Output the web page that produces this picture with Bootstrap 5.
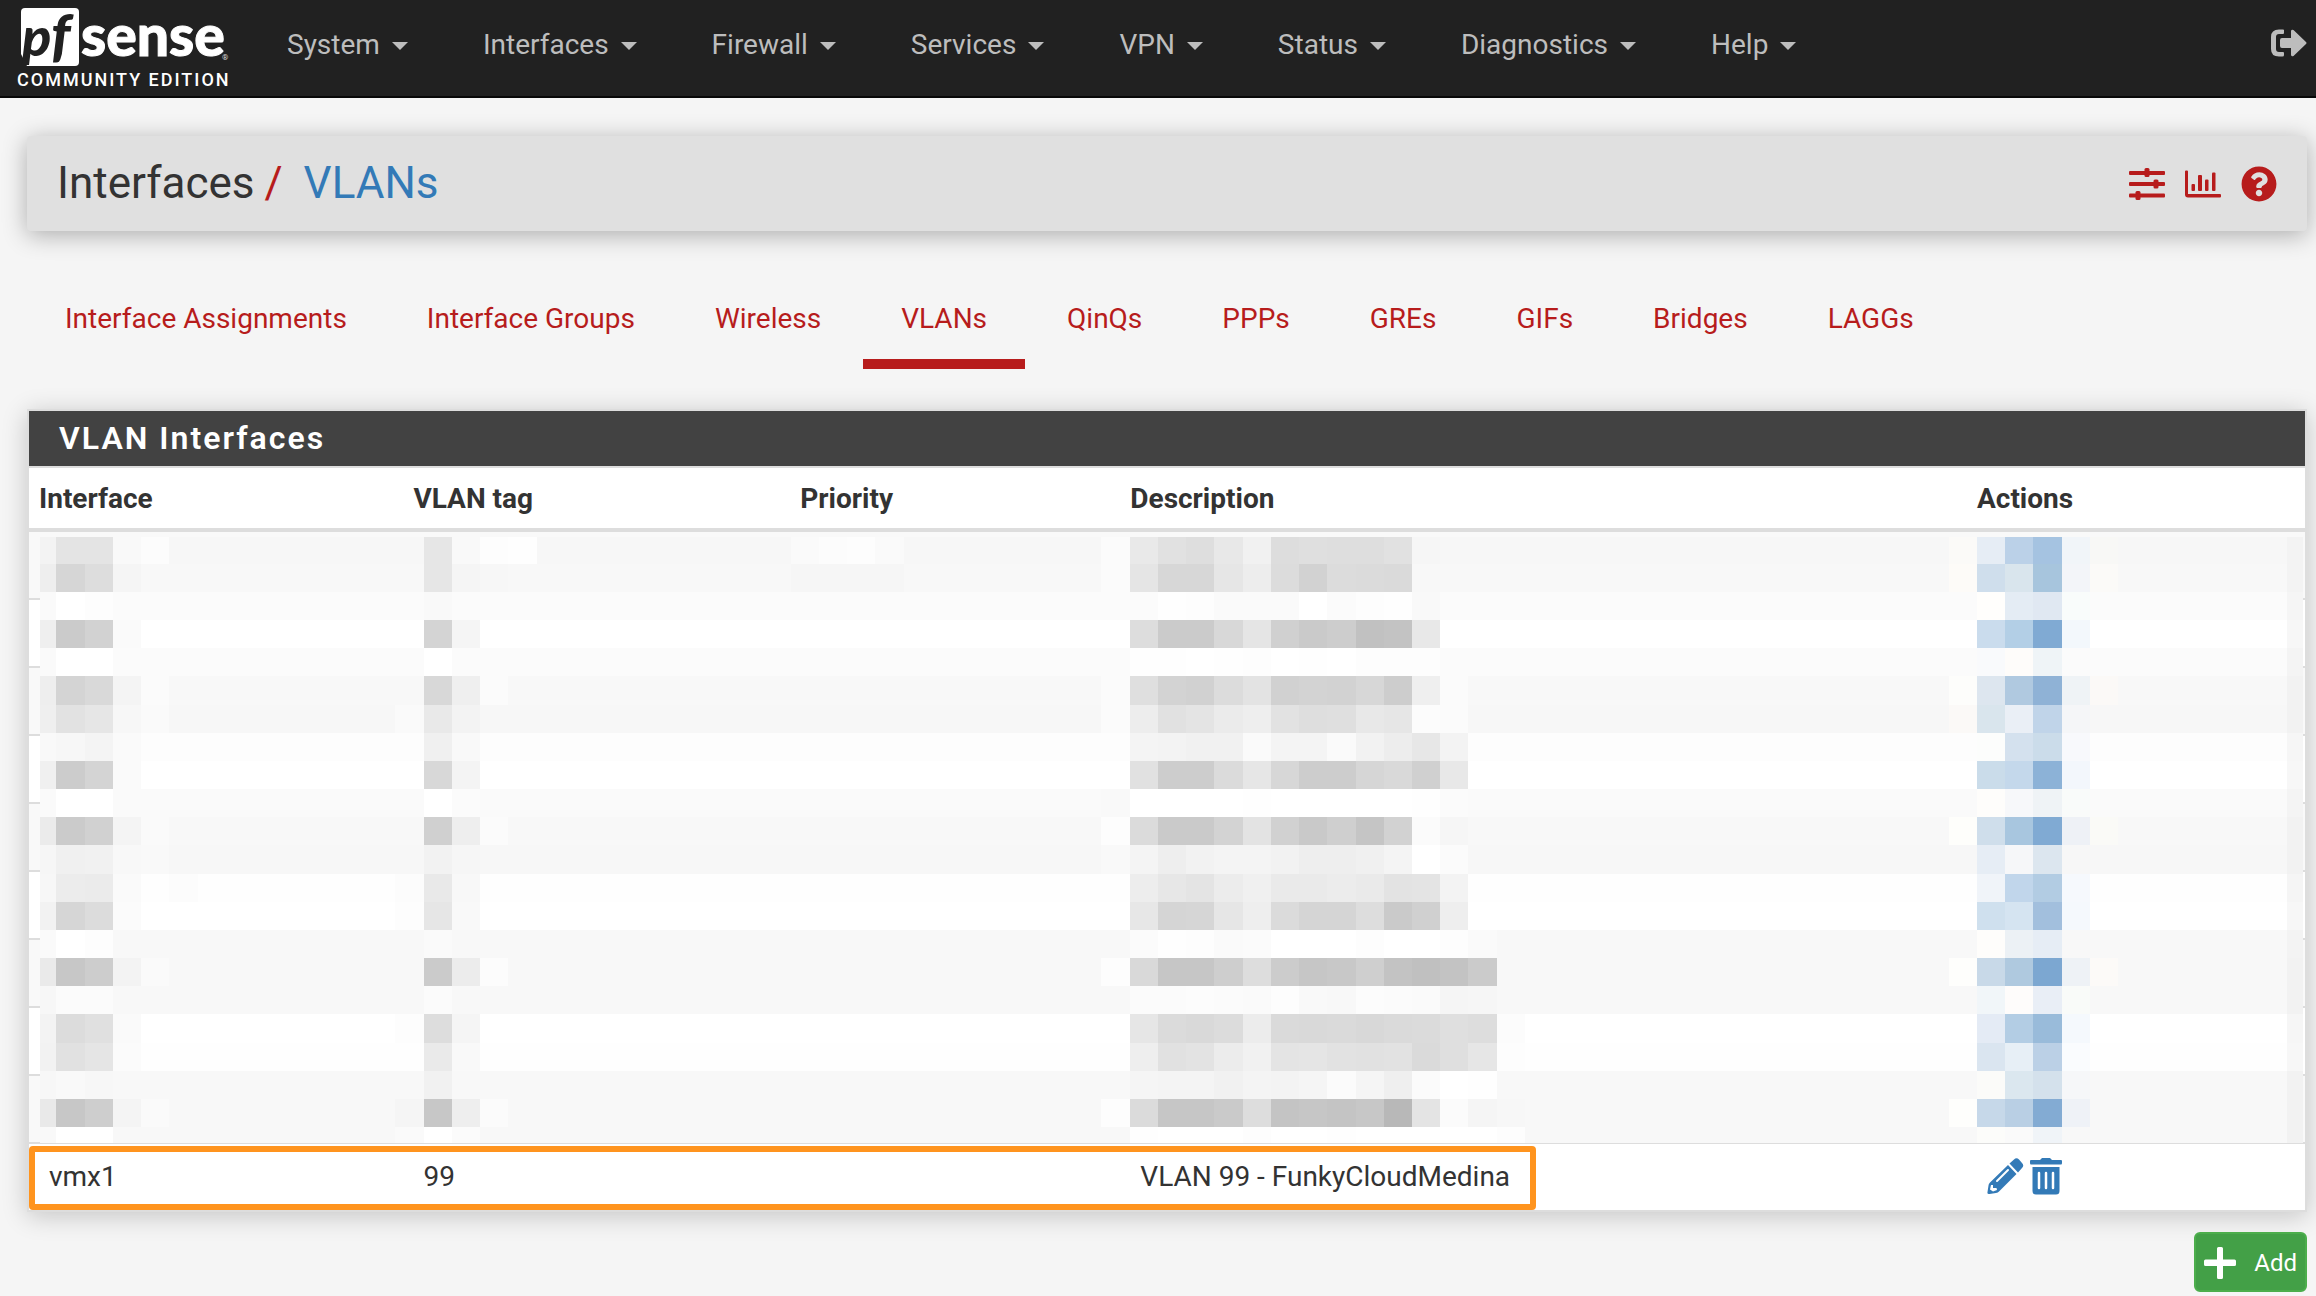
<!DOCTYPE html>
<html lang="en">
<head>
<meta charset="utf-8">
<meta name="viewport" content="width=device-width, initial-scale=1">
<title>Interfaces: VLANs</title>
<link href="https://cdn.jsdelivr.net/npm/bootstrap@5.3.0/dist/css/bootstrap.min.css" rel="stylesheet">
<style>
  body { background: #f5f5f5; color: #333; font-family: Roboto, "Liberation Sans", sans-serif; font-size: 28px; line-height: 40px; }
  a { text-decoration: none; }
  .topbar { --bs-navbar-padding-y: 0; height: 98px; background: #212121; border-bottom: 2px solid #080808; }
  .brand-logo { width: 230px; height: 96px; margin-left: 10px; margin-right: 9px; }
  .topbar .navbar-nav .nav-link { color: #bdbdbd; padding: 25px 37px 31px 38px; }
  .topbar .navbar-nav .dropdown-toggle::after { margin-left: 12px; vertical-align: 4px; border-top: 8px solid; border-right: 8px solid transparent; border-left: 8px solid transparent; }
  .signout { color: #bdbdbd; line-height: 0; margin-right: 9px; padding-bottom: 10px; }
  .page-head { background: #e0e0e0; height: 95px; margin: 38px 9px 0 27px; padding: 0 30px 0 30px; border-radius: 4px; box-shadow: 0 4px 24px rgba(0,0,0,.3); }
  .page-head h1 { font-size: 44px; line-height: 56px; font-weight: 400; padding-bottom: 2px; }
  .page-head .sep { color: #b71c1c; padding: 0 10px; }
  .page-head h1 a, .act { color: #337ab7; }
  .tools { gap: 20px; }
  .tools a { color: #b71c1c; line-height: 0; }
  .sub-tabs { margin: 45px 9px 40px 27px; gap: 4px; }
  .sub-tabs .nav-link { color: #b71c1c; padding: 23px 38px 20px; border-bottom: 10px solid transparent; }
  .sub-tabs .nav-link.active { border-bottom-color: #b71c1c; }
  .vlan-panel { margin: 0 9px 0 27px; border: 2px solid #ddd; background: #fff; box-shadow: 0 4px 24px rgba(0,0,0,.2); }
  .vlan-panel h2 { background: #424242; color: #fff; font-size: 32px; line-height: 55px; font-weight: 600; letter-spacing: 2px; padding-left: 30px; border-bottom: 2px solid #ddd; }
  .vlan-table { --bs-table-striped-bg: #f9f9f9; --bs-table-color: #333; --bs-table-striped-color: #333; table-layout: fixed; border-collapse: separate; border-spacing: 0; }
  .vlan-table > thead > tr > th { padding: 13px 10px 11px; line-height: 36px; border-bottom: 4px solid #ddd; font-weight: 700; }
  .vlan-table > tbody > tr > td { padding: 13px 20px; border-top: 2px solid #ddd; border-bottom: 0; }
  .vlan-table > tbody > tr:first-child > td { border-top: 0; }
  .row-tools { gap: 6px; padding-bottom: 2px; }
  .act { display: inline-block; line-height: 0; }
  .redaction { left: 11px; top: 69px; width: calc(100% - 13px); height: 606px; }
  .callout-box { left: 0; bottom: 0; width: 66.2%; height: 64px; border: 6px solid #ff941e; border-radius: 4px; pointer-events: none; }
  .add-btn { --bs-btn-bg: #43a047; --bs-btn-border-color: #4cae4c; --bs-btn-color: #fff; --bs-btn-hover-bg: #388e3c; --bs-btn-hover-color: #fff; --bs-btn-border-width: 2px; height: 60px; padding: 2px 8px 0; font-size: 24px; gap: 18px; border-radius: 6px; margin: 20px 9px 4px 0; }
</style>
<script src="https://cdn.jsdelivr.net/npm/bootstrap@5.3.0/dist/js/bootstrap.bundle.min.js"></script>
</head>
<body>
<nav class="navbar navbar-expand topbar" aria-label="Main">
  <a class="p-0" href="#">
    <svg class="brand-logo d-block" viewBox="0 0 230 96" role="img" aria-label="pfSense Community Edition">
      <path fill="#fff" d="M15 8H65Q69 8 69 12V62Q69 66 65 66H11V12Q11 8 15 8Z"/>
      <path fill="#212121" d="M11 54L17 66H11Z"/>
      <g font-family="Lato, sans-serif" font-weight="900">
        <text x="12" y="56" font-size="54" font-style="italic" fill="#212121">p</text>
        <text x="41" y="56" font-size="58" font-style="italic" fill="#212121">f</text>
        <text x="71" y="56" font-size="57" fill="#fff" stroke="#fff">sense<tspan dx="-3" dy="4" font-family="Roboto, sans-serif" font-weight="400" font-size="8" fill="#ddd" stroke="none">®</tspan></text>
      </g>
      <text x="7" y="86" font-family="Roboto, sans-serif" font-size="18" font-weight="500" letter-spacing="2" fill="#fff">COMMUNITY EDITION</text>
    </svg>
  </a>
  <ul class="navbar-nav me-auto">
    <li class="nav-item"><a class="nav-link dropdown-toggle" href="#">System</a></li>
    <li class="nav-item"><a class="nav-link dropdown-toggle" href="#">Interfaces</a></li>
    <li class="nav-item"><a class="nav-link dropdown-toggle" href="#">Firewall</a></li>
    <li class="nav-item"><a class="nav-link dropdown-toggle" href="#">Services</a></li>
    <li class="nav-item"><a class="nav-link dropdown-toggle" href="#">VPN</a></li>
    <li class="nav-item"><a class="nav-link dropdown-toggle" href="#">Status</a></li>
    <li class="nav-item"><a class="nav-link dropdown-toggle" href="#">Diagnostics</a></li>
    <li class="nav-item"><a class="nav-link dropdown-toggle" href="#">Help</a></li>
  </ul>
  <a class="signout" href="#" aria-label="Log out">
    <svg width="36" height="28" viewBox="0 0 36 28" fill="currentColor"><path d="M13 1V4Q13 5 12 5H8Q5 5 5 8V20Q5 23 8 23H12Q13 23 13 24V26Q13 27.500 11.500 27.500H8Q0 27.500 0 20V8Q0 .5 8 .5H12Q13 .5 13 1ZM20 2V9H11Q9 9 9 11V17Q9 19 11 19H20V26Q20.500 28 22.500 27L35 15Q36 14 35 13L22.500 1Q20.500 0 20 2Z"/></svg>
  </a>
</nav>

<header class="page-head d-flex align-items-center justify-content-between">
  <h1 class="mb-0">Interfaces<span class="sep">/</span> <a href="#">VLANs</a></h1>
  <div class="tools d-flex align-items-center">
    <a href="#" aria-label="Settings"><svg width="36" height="32" viewBox="0 0 36 32" fill="currentColor"><rect y="3" width="36" height="4" rx="1"/><rect y="14" width="36" height="4" rx="1"/><rect y="25.500" width="36" height="4" rx="1"/><rect x="15.500" y="0" width="5" height="9" rx="1.500"/><rect x="24.500" y="11.500" width="5" height="9" rx="1.500"/><rect x="6.500" y="23" width="5" height="9" rx="1.500"/></svg></a>
    <a href="#" aria-label="Status graph"><svg width="36" height="28" viewBox="0 0 36 28" fill="currentColor"><path d="M1 .5H2Q3 .5 3 1.500V24H35Q36 24 36 25V26.500Q36 27.500 35 27.500H3Q0 27.500 0 24.500V1.500Q0 .5 1 .5Z"/><rect x="6.500" y="14" width="3.500" height="7" rx="1"/><rect x="13" y="5" width="4" height="16" rx="1"/><rect x="20" y="9.500" width="3.500" height="11.500" rx="1"/><rect x="27" y="2.500" width="3.500" height="18.500" rx="1"/></svg></a>
    <a href="#" aria-label="Help"><svg width="36" height="36" viewBox="0 0 512 512" fill="currentColor"><path d="M504 256c0 136.997-111.043 248-248 248S8 392.997 8 256C8 119.083 119.043 8 256 8s248 111.083 248 248zM262.655 90c-54.497 0-89.255 22.957-116.549 63.758-3.536 5.286-2.353 12.415 2.715 16.258l34.699 26.310c5.205 3.947 12.621 3.008 16.665-2.122 17.864-22.658 30.113-35.797 57.303-35.797 20.429 0 45.698 13.148 45.698 32.958 0 14.976-12.363 22.667-32.534 33.976C247.128 238.528 216 254.941 216 296v4c0 6.627 5.373 12 12 12h56c6.627 0 12-5.373 12-12v-1.333c0-28.462 83.186-29.647 83.186-106.667 0-58.002-60.165-102-116.531-102zM256 338c-25.365 0-46 20.635-46 46 0 25.364 20.635 46 46 46s46-20.636 46-46c0-25.365-20.635-46-46-46z"/></svg></a>
  </div>
</header>

<ul class="nav sub-tabs">
  <li class="nav-item"><a class="nav-link" href="#">Interface Assignments</a></li>
  <li class="nav-item"><a class="nav-link" href="#">Interface Groups</a></li>
  <li class="nav-item"><a class="nav-link" href="#">Wireless</a></li>
  <li class="nav-item"><a class="nav-link active" aria-current="page" href="#">VLANs</a></li>
  <li class="nav-item"><a class="nav-link" href="#">QinQs</a></li>
  <li class="nav-item"><a class="nav-link" href="#">PPPs</a></li>
  <li class="nav-item"><a class="nav-link" href="#">GREs</a></li>
  <li class="nav-item"><a class="nav-link" href="#">GIFs</a></li>
  <li class="nav-item"><a class="nav-link" href="#">Bridges</a></li>
  <li class="nav-item"><a class="nav-link" href="#">LAGGs</a></li>
</ul>

<section class="vlan-panel">
  <h2 class="mb-0">VLAN Interfaces</h2>
  <div class="position-relative">
    <table class="table table-striped vlan-table mb-0">
      <colgroup><col style="width:16.45%"><col style="width:17%"><col style="width:14.5%"><col style="width:37.2%"><col style="width:14.85%"></colgroup>
      <thead><tr><th scope="col">Interface</th><th scope="col">VLAN tag</th><th scope="col">Priority</th><th scope="col">Description</th><th scope="col">Actions</th></tr></thead>
      <tbody>
        <tr><td>&nbsp;</td><td></td><td></td><td></td><td></td></tr>
        <tr><td>&nbsp;</td><td></td><td></td><td></td><td></td></tr>
        <tr><td>&nbsp;</td><td></td><td></td><td></td><td></td></tr>
        <tr><td>&nbsp;</td><td></td><td></td><td></td><td></td></tr>
        <tr><td>&nbsp;</td><td></td><td></td><td></td><td></td></tr>
        <tr><td>&nbsp;</td><td></td><td></td><td></td><td></td></tr>
        <tr><td>&nbsp;</td><td></td><td></td><td></td><td></td></tr>
        <tr><td>&nbsp;</td><td></td><td></td><td></td><td></td></tr>
        <tr><td>&nbsp;</td><td></td><td></td><td></td><td></td></tr>
        <tr class="align-middle"><td>vmx1</td><td>99</td><td></td><td>VLAN 99 - FunkyCloudMedina</td>
          <td class="text-nowrap"><div class="row-tools d-flex"><a class="act" href="#" aria-label="Edit VLAN"><svg width="37" height="38" viewBox="0 0 37 38" fill="currentColor"><path d="M27 2.500Q29.500 0 32 2.500L35 6Q37.500 8.500 35 11L31 15.500L22.500 6.500ZM21 8L29.500 17L12 34.500Q11 35.500 9 36L2.500 37Q0 37.500 .5 35L1.500 28.500Q1.500 27 3 25.500Z"/><path d="M10 24L21 13" stroke="#fff" stroke-width="2" stroke-linecap="round"/><path d="M4 28L6 28V31H9.500L10 33L6 34.500L3 32.500Z" fill="#fff"/></svg></a><a class="act" href="#" aria-label="Delete VLAN"><svg width="32" height="38" viewBox="0 0 32 38" fill="currentColor"><path d="M1 3H10L12 1H20L22 3H31Q32 3 32 4V6Q32 7.500 31 7.500H1Q0 7.500 0 6V4Q0 3 1 3ZM2.500 10H29.500V34Q29.500 37.500 26 37.500H6Q2.500 37.500 2.500 34Z"/><path d="M9 16V31M16 16V31M23 16V31" stroke="#fff" stroke-width="2.500" stroke-linecap="round"/></svg></a></div></td></tr>
      </tbody>
    </table>
    <svg class="redaction position-absolute" id="redaction" viewBox="0 0 2263 606" preserveAspectRatio="none" shape-rendering="crispEdges" aria-hidden="true"></svg>
    <div class="callout-box position-absolute"></div>
  </div>
</section>

<div class="d-flex justify-content-end">
  <button type="button" class="btn add-btn d-inline-flex align-items-center">
    <svg width="32" height="32" viewBox="0 0 32 32" fill="currentColor" aria-hidden="true"><path d="M14.500 0H17.500Q19 0 19 1.500V12.500H30.500Q32 12.500 32 14V17.500Q32 19 30.500 19H19V30.500Q19 32 17.500 32H14.500Q13 32 13 30.500V19H1.500Q0 19 0 17.500V14Q0 12.500 1.500 12.500H13V1.500Q13 0 14.500 0Z"/></svg>
    Add
  </button>
</div>

<script>
  // Pixelation over the private rows. Each line: row tint, then "column:shades" runs.
  const mosaic = [
    'f7 1:f3,e4,e4,f9,fc 14:f7,e6,f9,fd,fe 28:fa,fc,fd,fa 39:fb,e9,e1,de,e8,f1,dd,df,de,de,e1,f6 69:fbfaf8,e6edf5,bbd1e8,a5c3e1,f1f5f9,f8f8f6 81:f3',
    'f8 1:ee,d6,dd,f5 15:e6,f5,f7 28:f6,f6,f6,f6 39:fb,e5,d7,d7,e6,ed,dc,d2,dc,db,da 69:fdfbf8,cfdeec,d9e5ed,a7c5dd,f3f5f9,fbfaf8 81:f3',
    'fb 1:fa,ff,fd 15:f9 39:fb,fb,fe,fd,fa,fa,fa,ff,fb,fd,fe,f9 70:fffefc,e4ecf4,e0e8f2,f9fcfb 81:f5',
    'ff 1:ef,cb,d2,fa 15:d4,f5 40:dd,cb,cb,d8,e5,d0,ca,cd,c1,c3,e8 70:cadced,b3cfe6,80aad3,f3f8fc 81:f7',
    'fb 1:fa,ff,ff 15:ff 40:fe,fe,ff,fe,fd,ff,fe,ff,fd,fd,fd 70:f9fafc,fefcfa,eff4f7 81:f4',
    'f8 1:ee,d4,d9,f4,fb 14:f8,d8,ef,fb 39:fb,df,d3,d1,dc,e3,d1,d3,d2,d7,cd,ef,fb 69:fdfdfb,dde6ef,b0c9e0,8fb2d6,eff3f6,fbf9f7 81:f2',
    'f7 1:ef,e2,e6,f7,fa 14:fa,e9,f3 39:fb,ed,e1,e4,eb,ee,e2,de,df,e8,e6,fc,fb 69:fbf9f7,d9e5ed,eaeff6,c0d4e9,f5f6f8 81:f2',
    'fd 1:f9,f7,f4,fa 15:f0,f9 40:f4,f3,f1,f1,fa,f4,f4,fa,f2,ed,e7,f3 70:fcfdfc,d4e1ee,cbdcea,f8f9fc 81:f6',
    'ff 1:f0,cc,d4,fa 15:d8,f4 40:e1,cd,cd,db,e6,d7,cd,cd,d6,d9,d0,e8 70:cadcea,c4d8eb,8cb2d7,f3f7fc 81:f7',
    'fa 1:fa,ff,ff 15:ff,fb 39:f9,ff,ff,ff,ff,fe,ff,ff,ff,ff,ff,fe,fb 70:fefdfb,f7f8fa,eff3f6,f9fbfa 81:f4',
    'f8 1:eb,cb,d1,f4,fa 14:f8,d0,ee,fb 39:fd,db,ca,ca,d3,e3,d1,c9,cf,c5,d2,fb,f6 69:fefefb,cfdeeb,a8c6df,80aad3,eef1f6,fafaf7 81:f2',
    'f7 1:f6,f0,f1,f8,f9 15:f2,f6 39:f9,f4,ee,f2,f4,f4,f2,ee,ee,f0,f4,ff,fb 70:e6edf5,f6f7f9,dce6ef 81:f2',
    'fe 1:f7,ec,eb,fa,fe,fc 14:fc,e9,f8 40:ed,e7,e4,ec,f0,ea,ea,ec,ea,e3,e4,f3 70:f0f4f9,c1d6eb,b2cce3,f6f9fd 81:f5',
    'ff 1:f2,d6,dc,fb 14:fd,e6,f9 40:e7,d5,d6,e6,ee,db,d5,d5,dd,ca,d0,ee 70:cfe0ee,d5e4f1,a2bfdd,f5f9fd 81:f7',
    'f8 1:fa,ff,fd 15:fa 40:fb,fe,fd,fa,fb,ff,ff,ff,fd,ff,ff,fd,fa 70:fefdfb,ecf1f5,e6edf5 81:f3',
    'f8 1:ea,c7,cd,f3,fa 15:cb,ec,fc 39:fd,d9,c6,c6,ce,dd,cc,c6,c8,cf,c3,c0,c3,cb 69:fefefc,c8d9e8,afc9df,7ca7d1,eef2f6,fcfaf8 81:f2',
    'f8 1:f7,fb,fb 15:fb 40:fb,fb,fc,fb,fa,fd,f9,f8,fc,fb,fa,f5,f6 70:f1f6f9,fefcfb,e9eef6,f9fbf9 81:f2',
    'ff 1:f3,dc,e0,fa 14:fd,dd,f5 40:e6,db,d9,dc,ec,da,d9,da,d8,da,db,df,dd,fc 70:e4ebf5,b3cde4,99bbda,f5f9fd 81:f6',
    'fe 1:f2,e1,e5,fb 15:ea,f9 40:ee,e1,e3,ec,f1,e4,e5,e2,e1,e2,da,df,e6,fd 70:dae5f0,e7eff6,bbd0e6,fafcfe 81:f7',
    'f8 1:f7,f9,f7 15:f1 40:f5,f4,f4,f1,f4,f3,f5,fb,f5,ef,fb,ff,fe 70:fbfbf9,dbe7ef,d4e1ec,f6f7f9 81:f2',
    'f8 1:e9,c7,ce,f4,fa 14:f5,c7,ee,fb 39:fd,db,c6,c6,ca,dd,c4,c6,c4,c7,b8,e4,fb,f5,f7 69:fefefc,c6d8e9,b9cfe4,83abd3,eff2f7 81:f2',
    'f8 1:f9,ff,ff 14:fa,ff,fb 40:fe,ff,ff,ff,fd,ff,ff,fe,ff,ff,ff,ff,ff,fd 70:fcfcfa,fafafa,f0f4f8 81:f2'
  ];
  const svg = document.getElementById('redaction');
  const edgeX = c => Math.min(2263, Math.max(0, Math.round(c * 28.24) - 40));
  const edgeY = r => Math.min(606, Math.max(0, Math.round((r + 19) * 28.18) - 537));
  const tone = t => '#' + (t.length === 2 ? t + t + t : t);
  function cell(x0, x1, r, fill) {
    const el = document.createElementNS('http://www.w3.org/2000/svg', 'rect');
    el.setAttribute('x', x0); el.setAttribute('y', edgeY(r));
    el.setAttribute('width', x1 - x0); el.setAttribute('height', edgeY(r + 1) - edgeY(r));
    el.setAttribute('fill', tone(fill));
    svg.appendChild(el);
  }
  mosaic.forEach((line, r) => {
    const [base, ...runs] = line.split(' ');
    cell(0, 2263, r, base);
    runs.forEach(run => {
      const [start, shades] = run.split(':');
      shades.split(',').forEach((s, i) => cell(edgeX(+start + i), edgeX(+start + i + 1), r, s));
    });
  });
</script>
</body>
</html>
